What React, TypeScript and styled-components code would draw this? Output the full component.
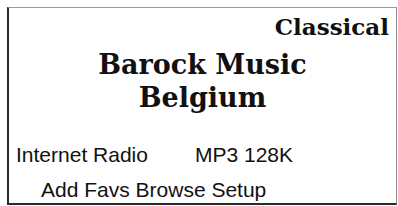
import React from "react";
import styled, { createGlobalStyle } from "styled-components";

const Global = createGlobalStyle`
  html, body { margin: 0; padding: 0; background: #fff; }
`;

const Screen = styled.div`
  box-sizing: border-box;
  margin: 7px 0 0 7px;
  width: 390px;
  height: 198px;
  border-top: 1px solid #9a9a9a;
  border-left: 2px solid #2a2a2a;
  border-right: 1px solid #8a8a8a;
  border-bottom: 2px solid #2a2a2a;
  background: #fff;
  display: flex;
  flex-direction: column;
  color: #111;
`;

const Genre = styled.div`
  font-family: "DejaVu Serif", serif;
  font-weight: bold;
  font-size: 23px;
  line-height: 26px;
  text-align: right;
  padding: 6px 7px 0 0;
`;

const Title = styled.div`
  font-family: "DejaVu Serif", serif;
  font-weight: bold;
  font-size: 27px;
  line-height: 33px;
  text-align: center;
  margin-top: 8px;
`;

const Info = styled.div`
  display: flex;
  font-family: "Liberation Sans", Arial, sans-serif;
  font-size: 21px;
  line-height: 24px;
  margin-top: 29px;
  padding-left: 7px;
`;

const InfoItem = styled.span<{ $w?: number }>`
  width: ${(p) => (p.$w ? `${p.$w}px` : "auto")};
`;

const Menu = styled.div`
  font-family: "Liberation Sans", Arial, sans-serif;
  font-size: 21px;
  line-height: 24px;
  margin-top: 11px;
  padding-left: 32px;
`;

export default function App() {
  return (
    <>
      <Global />
      <Screen>
        <Genre>Classical</Genre>
        <Title>
          Barock Music
          <br />
          Belgium
        </Title>
        <Info>
          <InfoItem $w={179}>Internet Radio</InfoItem>
          <InfoItem>MP3 128K</InfoItem>
        </Info>
        <Menu>Add Favs Browse Setup</Menu>
      </Screen>
    </>
  );
}
